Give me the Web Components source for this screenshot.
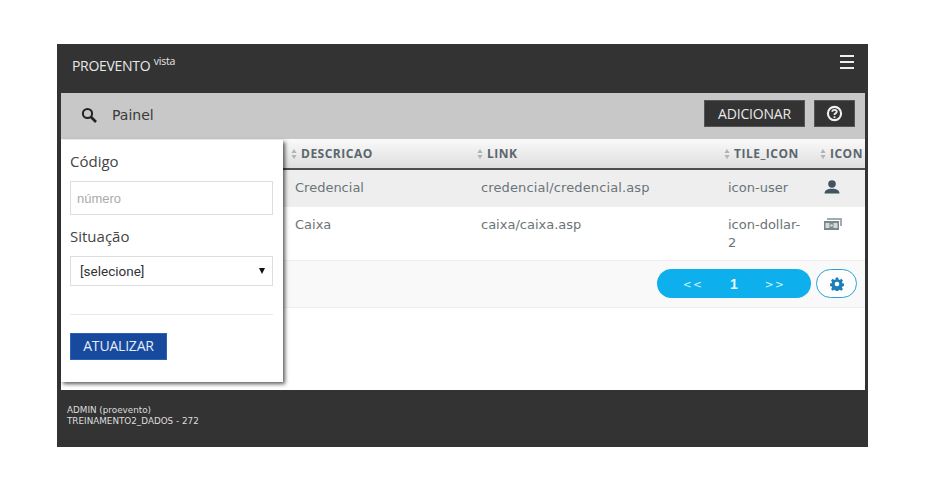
<!DOCTYPE html>
<html lang="pt">
<head>
<meta charset="utf-8">
<title>Painel</title>
<style>
  html, body { margin: 0; background: #fff; }
  body { padding: 44px 71px 57px 57px; font-family: "Open Sans", sans-serif; }
</style>
</head>
<body>
<pv-app>
  <pv-topbar slot="top">PROEVENTO</pv-topbar>
  <pv-toolbar slot="tools">Painel</pv-toolbar>
  <pv-grid slot="main"></pv-grid>
  <pv-filter slot="over"></pv-filter>
  <pv-status slot="bottom">ADMIN (proevento)<br>TREINAMENTO2_DADOS - 272</pv-status>
</pv-app>

<script>
class PvApp extends HTMLElement {
    connectedCallback() {
        this.attachShadow({ mode: 'open' });
        this.shadowRoot.innerHTML = `
            <style>
                :host { display: block; width: 811px; height: 403px; background: #333; }
                .frame { display: flex; flex-direction: column; height: 100%; }
                .body {
                    position: relative;
                    flex: 1;
                    margin: 0 3px 0 4px;
                    background: #fff;
                    display: flex;
                    flex-direction: column;
                }
                .over { position: absolute; left: 0; top: 47px; }
            </style>
            <div class="frame">
                <slot name="top"></slot>
                <div class="body">
                    <slot name="tools"></slot>
                    <slot name="main"></slot>
                    <div class="over"><slot name="over"></slot></div>
                </div>
                <slot name="bottom"></slot>
            </div>
        `;
    }
}

class PvTopbar extends HTMLElement {
    connectedCallback() {
        this.attachShadow({ mode: 'open' });
        this.shadowRoot.innerHTML = `
            <style>
                :host {
                    display: flex;
                    align-items: center;
                    justify-content: space-between;
                    height: 49px;
                    padding: 0 14px 0 15px;
                    color: #e8e8e8;
                    font: 14px "Open Sans", sans-serif;
                }
                .brand { position: relative; top: -3px; letter-spacing: -0.3px; }
                sup { font-size: 10.5px; vertical-align: 6px; line-height: 0; letter-spacing: -0.2px; }
                .burger { display: flex; flex-direction: column; gap: 4px; width: 14px; position: relative; top: -7px; }
                .burger i { display: block; height: 2px; background: #eee; }
            </style>
            <span class="brand"><slot></slot> <sup>vista</sup></span>
            <span class="burger"><i></i><i></i><i></i></span>
        `;
    }
}

class PvToolbar extends HTMLElement {
    connectedCallback() {
        this.attachShadow({ mode: 'open' });
        this.shadowRoot.innerHTML = `
            <style>
                :host {
                    display: flex;
                    align-items: center;
                    height: 46px;
                    background: #c8c8c8;
                    padding: 0 10px 2px 20px;
                    box-sizing: border-box;
                    color: #333;
                }
                svg.search { width: 16px; height: 16px; }
                .title { margin-left: 15px; font: 14px "DejaVu Sans", sans-serif; flex: 1; color: #3a3a3a; }
                button {
                    height: 27px;
                    background: #333;
                    color: #e8e8e8;
                    border: 1px solid #555;
                    font: 14px "Open Sans", sans-serif;
                    letter-spacing: -0.2px;
                    padding: 0;
                    display: flex;
                    align-items: center;
                    justify-content: center;
                    margin-top: -3px;
                }
                .add { width: 101px; }
                .help { width: 41px; margin-left: 9px; }
                .help svg { width: 17px; height: 17px; }
            </style>
            <svg class="search" viewBox="0 0 16 16" fill="none" stroke="#222" stroke-width="2">
                <circle cx="6.5" cy="6.5" r="4.6"/>
                <path d="M10 10l5 5" stroke-width="2.6"/>
            </svg>
            <span class="title"><slot></slot></span>
            <button class="add">ADICIONAR</button>
            <button class="help" aria-label="Ajuda">
                <svg viewBox="0 0 16 16" fill="none" stroke="#f0f0f0">
                    <circle cx="8" cy="8" r="6.2" stroke-width="2"/>
                    <path d="M5.900 6.400c0-1.200 1-1.900 2.100-1.900s2.100.7 2.100 1.800c0 1.600-2.100 1.500-2.100 3" stroke-width="1.700"/>
                    <path d="M8 10.600v1.600" stroke-width="1.700"/>
                </svg>
            </button>
        `;
    }
}

class PvGrid extends HTMLElement {
    connectedCallback() {
        this.attachShadow({ mode: 'open' });
        const sort = `<svg class="sort" viewBox="0 0 6 10"><path d="M3 0l2.600 4H.4zM3 10L.4 6h5.200z" fill="#aeb4b8"/></svg>`;
        this.shadowRoot.innerHTML = `
            <style>
                :host {
                    display: block;
                    font: 13px "DejaVu Sans", sans-serif;
                    color: #6b7478;
                }
                .row {
                    display: grid;
                    grid-template-columns: 228px 186px 247px 96px 47px;
                }
                .row > div { padding-left: 6px; box-sizing: border-box; }
                .head {
                    height: 31px;
                    align-items: center;
                    background: linear-gradient(#fafafa, #dedede);
                    border-bottom: 2px solid #4a4f52;
                    box-sizing: border-box;
                    font: bold 12px "Open Sans", sans-serif;
                    letter-spacing: 0.5px;
                    color: #5b666c;
                }
                .row.head > div { padding-left: 2px; display: flex; align-items: center; gap: 4px; }
                .sort { width: 6px; height: 10px; flex: none; }
                .r1 { height: 37px; background: #eee; align-items: center; padding-bottom: 3px; box-sizing: border-box; }
                .r2 { height: 54px; background: #fff; padding-top: 9px; box-sizing: border-box; line-height: 18px; border-bottom: 1px solid #eee; }
                .r2 > .wrap { padding-right: 14px; }
                .foot {
                    height: 47px;
                    background: #f9f9f9;
                    border-bottom: 1px solid #eee;
                    box-sizing: border-box;
                    display: flex;
                    align-items: flex-start;
                    justify-content: flex-end;
                    padding: 8px 8px 0 0;
                    gap: 5px;
                }
                .pager {
                    width: 154px;
                    height: 29px;
                    border-radius: 15px;
                    background: #0db0ec;
                    color: #d9f3fd;
                    display: grid;
                    grid-template-columns: 72px 10px 72px;
                    align-items: center;
                    justify-items: center;
                    font: 10.5px "DejaVu Sans", sans-serif;
                    letter-spacing: 1.5px;
                }
                .pager b { font: bold 14px "Liberation Sans", sans-serif; color: #e8f8fe; letter-spacing: 0; }
                .gear {
                    width: 41px;
                    height: 29px;
                    border: 1.5px solid #2aa3d4;
                    border-radius: 15px;
                    box-sizing: border-box;
                    background: #fff;
                    display: flex;
                    align-items: center;
                    justify-content: center;
                }
                .gear svg { width: 14px; height: 14px; }
                .ic { display: block; }
                .ic.money { margin-top: 2px; }
            </style>
            <div class="row head">
                <div></div>
                <div>${sort}DESCRICAO</div>
                <div>${sort}LINK</div>
                <div>${sort}TILE_ICON</div>
                <div>${sort}ICON</div>
            </div>
            <div class="row r1">
                <div></div>
                <div>Credencial</div>
                <div style="letter-spacing:.12px">credencial/credencial.asp</div>
                <div>icon-user</div>
                <div>
                    <svg class="ic" width="16" height="14" viewBox="0 0 16 14" fill="#3f5660">
                        <ellipse cx="8" cy="4" rx="3.800" ry="3.700"/>
                        <path d="M.5 13.500c0-3 2.500-4.800 7.500-4.800s7.500 1.800 7.500 4.800z"/>
                    </svg>
                </div>
            </div>
            <div class="row r2">
                <div></div>
                <div>Caixa</div>
                <div>caixa/caixa.asp</div>
                <div class="wrap">icon-dollar-2</div>
                <div>
                    <svg class="ic money" width="18" height="12" viewBox="0 0 18 12">
                        <path d="M3 0h15v8h-2V2H3z" fill="#a4abaf"/>
                        <rect x="0" y="3" width="15" height="9" fill="#7d868b"/>
                        <rect x="1.500" y="5" width="4" height="5" fill="#d5d9db"/>
                        <rect x="9.500" y="5" width="4" height="5" fill="#d5d9db"/>
                        <circle cx="7.500" cy="7.500" r="1.300" fill="#d5d9db"/>
                    </svg>
                </div>
            </div>
            <div class="foot">
                <div class="pager"><span>&lt;&lt;</span><b>1</b><span>&gt;&gt;</span></div>
                <div class="gear">
                    <svg viewBox="0 0 24 24" fill="#1d7fb8">
                        <path fill-rule="evenodd" d="M10 1h4l.7 3.200 1.900.8 2.800-1.800 2.800 2.800-1.800 2.800.8 1.900 3.200.7v4l-3.200.7-.8 1.900 1.800 2.800-2.800 2.800-2.800-1.800-1.900.8-.7 3.200h-4l-.7-3.200-1.900-.8-2.800 1.800-2.800-2.800 1.800-2.800-.8-1.900-3.200-.7v-4l3.200-.7.8-1.900-1.800-2.800 2.800-2.800 2.800 1.800 1.900-.8zM12 8a4 4 0 1 0 0 8 4 4 0 0 0 0-8z"/>
                    </svg>
                </div>
            </div>
        `;
    }
}

class PvFilter extends HTMLElement {
    connectedCallback() {
        this.attachShadow({ mode: 'open' });
        this.shadowRoot.innerHTML = `
            <style>
                :host {
                    display: block;
                    width: 222px;
                    height: 242px;
                    box-sizing: border-box;
                    padding: 11px 10px 0 9px;
                    background: #fff;
                    box-shadow: 2px 2px 4px rgba(0,0,0,.65);
                    font: 15px "Open Sans", sans-serif;
                    color: #444;
                }
                label { display: block; height: 20px; line-height: 20px; }
                .num {
                    display: block;
                    width: 100%;
                    height: 34px;
                    box-sizing: border-box;
                    margin-top: 10px;
                    border: 1px solid #ddd;
                    padding: 0 6px;
                    font: 13px "Liberation Sans", sans-serif;
                    color: #aaa;
                    outline: 0;
                }
                .num::placeholder { color: #aaa; }
                .two { margin-top: 11px; }
                .sel {
                    display: flex;
                    align-items: center;
                    justify-content: space-between;
                    height: 30px;
                    box-sizing: border-box;
                    margin-top: 10px;
                    border: 1px solid #ddd;
                    padding: 0 7px 0 9px;
                    font: 13.500px Roboto, sans-serif;
                    color: #333;
                }
                .arrow { width: 0; height: 0; border: 3px solid transparent; border-top: 6px solid #111; border-bottom: 0; }
                hr { margin: 28px 0 0; border: 0; border-top: 1px solid #e8e8e8; }
                button {
                    display: block;
                    margin-top: 18px;
                    width: 97px;
                    height: 27px;
                    padding: 0 0 2px;
                    border: 1px solid #2a62b4;
                    background: #174a9f;
                    color: #e6ecf6;
                    font: 14px "Open Sans", sans-serif;
                    letter-spacing: -0.2px;
                }
            </style>
            <label>Código</label>
            <input class="num" placeholder="número">
            <label class="two">Situação</label>
            <div class="sel"><span>[selecione]</span><span class="arrow"></span></div>
            <hr>
            <button>ATUALIZAR</button>
        `;
    }
}

class PvStatus extends HTMLElement {
    connectedCallback() {
        this.attachShadow({ mode: 'open' });
        this.shadowRoot.innerHTML = `
            <style>
                :host {
                    display: block;
                    height: 57px;
                    box-sizing: border-box;
                    padding: 15px 0 0 10px;
                    color: #ddd;
                    font: 8.800px/11px "DejaVu Sans", sans-serif;
                }
            </style>
            <slot></slot>
        `;
    }
}

customElements.define('pv-app', PvApp);
customElements.define('pv-topbar', PvTopbar);
customElements.define('pv-toolbar', PvToolbar);
customElements.define('pv-grid', PvGrid);
customElements.define('pv-filter', PvFilter);
customElements.define('pv-status', PvStatus);
</script>
</body>
</html>
